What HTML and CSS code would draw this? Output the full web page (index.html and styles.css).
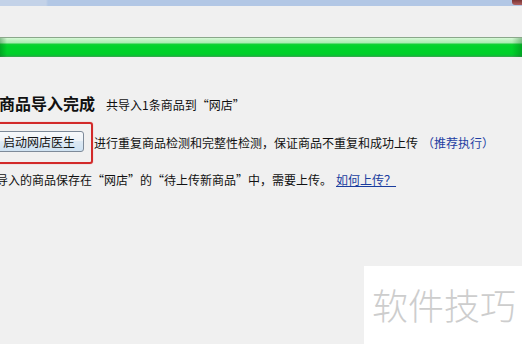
FILE: index.html
```html
<!DOCTYPE html>
<html lang="zh-CN">
<head>
<meta charset="utf-8">
<link rel="stylesheet" href="styles.css">
</head>
<body>
<div class="titlebar"><span class="close-edge"></span></div>
<div class="progress"><div class="progress-fill"></div></div>
<main class="content">
  <div class="title-row">
    <h1 class="title">商品导入完成</h1>
    <span class="subtitle">共导入1条商品到“网店”</span>
  </div>
  <div class="action-row">
    <div class="highlight">
      <button class="btn">启动网店医生</button>
    </div>
    <span class="desc">进行重复商品检测和完整性检测，保证商品不重复和成功上传</span>
    <span class="recommend">（推荐执行）</span>
  </div>
  <div class="info-row">
    <span class="info">导入的商品保存在“网店”的“待上传新商品”中，需要上传。</span>
    <a class="link" href="#">如何上传？</a>
  </div>
</main>
<div class="watermark">软件技巧</div>
</body>
</html>
```
FILE: styles.css
```css
html, body {
  margin: 0;
  padding: 0;
}
body {
  width: 522px;
  height: 344px;
  overflow: hidden;
  background: #f0f0f0;
  font-family: "Noto Sans CJK SC", "Noto Sans", sans-serif;
  font-size: 12px;
  color: #111;
  position: relative;
}
.titlebar {
  height: 6px;
  background: linear-gradient(90deg, #c3d2e8 0, #c3d2e8 46px, #b2c7e5 48px, #b2c7e5 100%);
  display: flex;
  justify-content: flex-end;
}
.close-edge {
  width: 10px;
  height: 5px;
  background: linear-gradient(#7a3434, #b06060);
  border-bottom-left-radius: 3px;
}
.progress {
  margin-top: 31px;
  height: 20px;
  border-top: 1px solid #8aa88a;
  box-sizing: border-box;
  background: linear-gradient(#d8f8d8 0, #c2f2c4 2px, #a8ecb0 5px, #16cf38 6px, #00d42a 8px, #00d02a 16px, #12b83a 18px, #4fa05a 19px);
  position: relative;
}
.progress-fill {
  height: 100%;
  background:
    linear-gradient(90deg, rgba(0,90,20,0.35) 0, rgba(0,90,20,0) 7px),
    linear-gradient(270deg, rgba(0,90,20,0.35) 0, rgba(0,90,20,0) 10px);
}
.content {
  padding-top: 36px;
}
.title-row {
  display: flex;
  align-items: baseline;
  gap: 11px;
  margin-left: -1px;
  height: 20px;
}
.title {
  margin: 0;
  font-size: 16px;
  line-height: 20px;
  font-weight: 700;
  color: #111;
}
.subtitle {
  font-size: 12px;
  line-height: 20px;
}
.action-row {
  display: flex;
  align-items: center;
  margin-top: 9px;
}
.highlight {
  margin-left: -15px;
  border: 2px solid #d22a2a;
  border-radius: 3px;
  padding: 7px 7px 10px 7px;
  box-shadow: 0 0 1px rgba(210, 42, 42, 0.6);
}
.btn {
  display: block;
  height: 21px;
  padding: 0 8px;
  border: 1px solid #7d8a99;
  border-radius: 3px;
  background: linear-gradient(#f7f9fb 0%, #eef3f8 45%, #dde9f4 50%, #cfe2f2 100%);
  font-family: inherit;
  font-size: 12px;
  line-height: 19px;
  color: #111;
}
.desc {
  margin-left: 1px;
  line-height: 18px;
}
.recommend {
  margin-left: 4px;
  color: #1f3ea3;
  line-height: 18px;
}
.info-row {
  display: flex;
  align-items: center;
  margin-top: 7px;
  margin-left: -4px;
  height: 18px;
}
.info {
  line-height: 18px;
}
.link {
  margin-left: 4px;
  color: #1a3d9e;
  text-decoration: underline;
  line-height: 18px;
}
.watermark {
  position: absolute;
  left: 364px;
  top: 266px;
  right: 0;
  bottom: 0;
  background: #fff;
  box-sizing: border-box;
  padding: 18px 0 0 8px;
  font-size: 36px;
  line-height: 40px;
  color: #cdcdcd;
  font-weight: 300;
  letter-spacing: 0;
}
```
